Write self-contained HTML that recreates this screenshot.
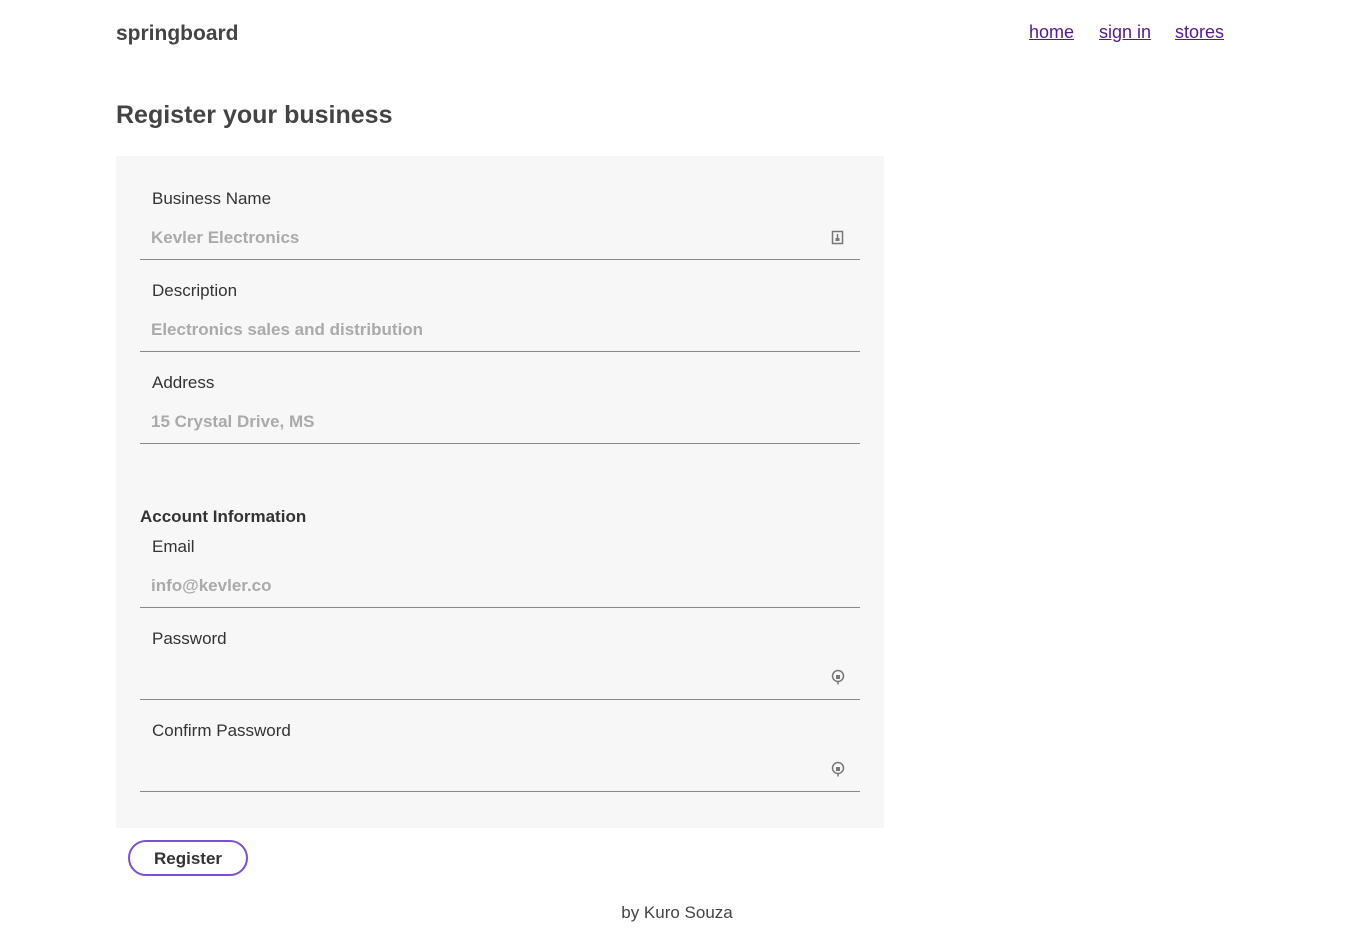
<!DOCTYPE html>
<html><head><meta charset="utf-8"><style>
body{margin:0;background:#fff;font-family:"Liberation Sans",sans-serif;color:#333;width:1354px;height:932px;position:relative;overflow:hidden}
.abs{position:absolute}
.logo{left:116px;top:22px;font-size:21px;font-weight:bold;color:#444}
.nav a{position:absolute;top:22px;font-size:18px;color:#551a8b;text-decoration:underline}
h1{position:absolute;left:116px;top:101px;margin:0;font-size:25px;color:#444}
.card{left:116px;top:156px;width:768px;height:672px;background:#f7f7f7}
.lbl{position:absolute;left:152px;font-size:17px;color:#333}
.val{position:absolute;left:151px;font-size:17px;font-weight:bold;color:#aaa}
.line{position:absolute;left:140px;width:720px;height:1px;background:#888}
.sec{left:140px;top:507px;font-size:17px;font-weight:bold;color:#333}
.btn{left:128px;top:840px;width:116px;height:32px;border:2px solid #7b4fd6;border-radius:18px;font-size:17px;font-weight:bold;color:#333;text-align:center;line-height:34px}
.foot{left:0;width:1354px;text-align:center;top:903px;font-size:17px;color:#444}
</style></head><body>
<div class="abs logo">springboard</div>
<div class="nav"><a style="left:1029px">home</a><a style="left:1099px">sign in</a><a style="left:1175px">stores</a></div>
<h1>Register your business</h1>
<div class="abs card"></div>
<div class="lbl" style="top:189px">Business Name</div>
<div class="val" style="top:228px">Kevler Electronics</div>
<svg class="abs" style="left:831px;top:230px" width="14" height="16" viewBox="0 0 14 16"><rect x="1.5" y="1.5" width="10" height="12" fill="none" stroke="#777" stroke-width="1.5"/><rect x="4.5" y="8" width="4" height="3" fill="#777"/><path d="M6.5 4v4" stroke="#777" stroke-width="1.5"/></svg>
<div class="line" style="top:259px"></div>
<div class="lbl" style="top:281px">Description</div>
<div class="val" style="top:320px">Electronics sales and distribution</div>
<div class="line" style="top:351px"></div>
<div class="lbl" style="top:373px">Address</div>
<div class="val" style="top:412px">15 Crystal Drive, MS</div>
<div class="line" style="top:443px"></div>
<div class="abs sec">Account Information</div>
<div class="lbl" style="top:537px">Email</div>
<div class="val" style="top:576px">info@kevler.co</div>
<div class="line" style="top:607px"></div>
<div class="lbl" style="top:629px">Password</div>
<svg class="abs" style="left:831px;top:669px" width="14" height="18" viewBox="0 0 14 18"><circle cx="7" cy="7" r="5.5" fill="none" stroke="#777" stroke-width="1.5"/><rect x="5" y="6" width="4" height="4" fill="#777"/><path d="M7 12.5v3" stroke="#777" stroke-width="1.5"/></svg>
<div class="line" style="top:699px"></div>
<div class="lbl" style="top:721px">Confirm Password</div>
<svg class="abs" style="left:831px;top:761px" width="14" height="18" viewBox="0 0 14 18"><circle cx="7" cy="7" r="5.5" fill="none" stroke="#777" stroke-width="1.5"/><rect x="5" y="6" width="4" height="4" fill="#777"/><path d="M7 12.5v3" stroke="#777" stroke-width="1.5"/></svg>
<div class="line" style="top:791px"></div>
<div class="abs btn">Register</div>
<div class="abs foot">by Kuro Souza</div>
</body></html>
